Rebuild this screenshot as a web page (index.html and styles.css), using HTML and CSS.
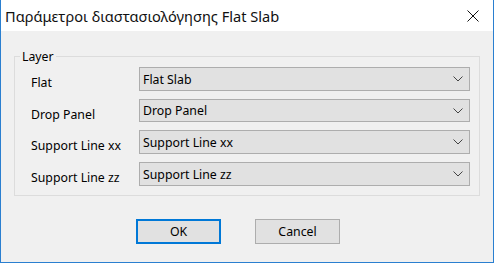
FILE: index.html
```html
<!DOCTYPE html>
<html lang="el">
<head>
<meta charset="UTF-8">
<title>Παράμετροι διαστασιολόγησης Flat Slab</title>
<link rel="stylesheet" href="styles.css">
</head>
<body>

<div class="window">
  <div class="titlebar">
    <span class="title">Παράμετροι διαστασιολόγησης Flat Slab</span>
    <span class="close">
      <svg width="12" height="12" viewBox="0 0 12 12"><path d="M0.5 0.5 L11.5 11.5 M11.5 0.5 L0.5 11.5" stroke="#111" stroke-width="1" fill="none"/></svg>
    </span>
  </div>

  <div class="content">
    <fieldset class="group">
      <legend>Layer</legend>
      <div class="rows">
        <label class="lbl">Flat</label>
        <div class="combo"><span>Flat Slab</span><svg class="chev" width="10" height="6" viewBox="0 0 10 6"><path d="M0.5 0.5 L5 5 L9.5 0.5" stroke="#444" fill="none"/></svg></div>

        <label class="lbl">Drop Panel</label>
        <div class="combo"><span>Drop Panel</span><svg class="chev" width="10" height="6" viewBox="0 0 10 6"><path d="M0.5 0.5 L5 5 L9.5 0.5" stroke="#444" fill="none"/></svg></div>

        <label class="lbl">Support Line xx</label>
        <div class="combo"><span>Support Line xx</span><svg class="chev" width="10" height="6" viewBox="0 0 10 6"><path d="M0.5 0.5 L5 5 L9.5 0.5" stroke="#444" fill="none"/></svg></div>

        <label class="lbl">Support Line zz</label>
        <div class="combo"><span>Support Line zz</span><svg class="chev" width="10" height="6" viewBox="0 0 10 6"><path d="M0.5 0.5 L5 5 L9.5 0.5" stroke="#444" fill="none"/></svg></div>
      </div>
    </fieldset>

    <div class="buttons">
      <button class="btn default">OK</button>
      <button class="btn">Cancel</button>
    </div>
  </div>
</div>

</body>
</html>
```

FILE: styles.css
```css
body {
  margin: 0;
  background: #fff;
  font-family: "Noto Sans", "DejaVu Sans", sans-serif;
  color: #000;
}

.window {
  width: 494px;
  height: 263px;
  box-sizing: border-box;
  border: 1px solid #2a7fd0;
  border-top: none;
  background: #f0f0f0;
  display: flex;
  flex-direction: column;
}

.titlebar {
  height: 31px;
  background: #fff;
  display: flex;
  align-items: center;
  justify-content: space-between;
  padding: 0 14px 0 4px;
}

.title {
  font-size: 14.6px;
  color: #111;
}

.close {
  display: flex;
  padding-top: 1px;
}

.content {
  padding: 18px 13px 0 13px;
  font-size: 12.3px;
}

.group {
  margin: 0;
  border: 1px solid #dcdcdc;
  padding: 3px 8px 9px 16px;
}

.group legend {
  padding: 0 2px;
  margin-left: -11px;
  line-height: 15px;
}

.rows {
  display: grid;
  grid-template-columns: 108px 331px;
  grid-template-rows: 24px 23px 24px 24px;
  row-gap: 8px;
}

.lbl {
  padding-top: 9px;
  line-height: 14px;
}

.combo {
  box-sizing: border-box;
  border: 1px solid #adadad;
  background: #e1e1e1;
  display: flex;
  align-items: center;
  justify-content: space-between;
  padding: 0 6px 0 3px;
}

.buttons {
  display: flex;
  gap: 34px;
  padding: 23px 0 0 122px;
}

.btn {
  width: 85px;
  height: 25px;
  font-family: inherit;
  font-size: 12.3px;
  background: #e1e1e1;
  border: 1px solid #adadad;
  padding: 0;
  color: #000;
}

.btn.default {
  border: 2px solid #0078d7;
}
```
